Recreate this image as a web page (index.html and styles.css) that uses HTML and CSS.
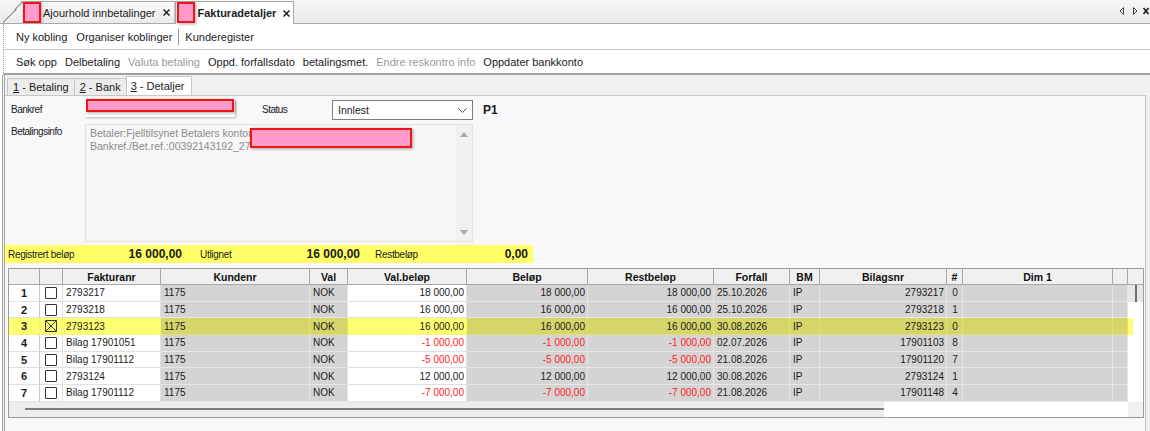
FILE: index.html
```html
<!DOCTYPE html>
<html lang="no">
<head>
    <meta charset="UTF-8">
    <title>Fakturadetaljer</title>
    <link rel="stylesheet" href="styles.css">
</head>
<body>
    <div class="doc-tabs">
        <div class="doc-tab first">
            <span class="redact tab-redact"></span>
            <span class="doc-title">Ajourhold innbetalinger</span>
            <svg class="close" width="7" height="7" viewBox="0 0 7 7"><path d="M0.5 0.5L6.5 6.5M6.5 0.5L0.5 6.5"/></svg>
        </div>
        <div class="doc-tab active">
            <span class="redact tab-redact"></span>
            <span class="doc-title">Fakturadetaljer</span>
            <svg class="close" width="7" height="7" viewBox="0 0 7 7"><path d="M0.5 0.5L6.5 6.5M6.5 0.5L0.5 6.5"/></svg>
        </div>
        <svg class="tab-nav" width="32" height="10" viewBox="0 0 32 10">
            <path class="nav-arrow" d="M5.5 1.5L2 5L5.5 8.5Z"/>
            <path class="nav-arrow" d="M15.5 1.5L19 5L15.5 8.5Z"/>
            <path class="nav-close" d="M25.5 2L30.5 8M30.5 2L25.5 8"/>
        </svg>
    </div>

    <div class="toolbar top">
        <span>Ny kobling</span>
        <span>Organiser koblinger</span>
        <span class="sep"></span>
        <span>Kunderegister</span>
    </div>
    <div class="toolbar bottom">
        <span>Søk opp</span>
        <span>Delbetaling</span>
        <span class="disabled">Valuta betaling</span>
        <span>Oppd. forfallsdato</span>
        <span>betalingsmet.</span>
        <span class="disabled">Endre reskontro info</span>
        <span>Oppdater bankkonto</span>
    </div>

    <div class="workspace">
        <div class="page-tabs">
            <span class="page-tab"><u>1</u>&nbsp;- Betaling</span>
            <span class="page-tab"><u>2</u>&nbsp;- Bank</span>
            <span class="page-tab active"><u>3</u>&nbsp;- Detaljer</span>
        </div>

        <div class="page">
            <div class="field-row first">
                <span class="label">Bankref</span>
                <span class="input bankref"><span class="redact bankref-redact"></span></span>
                <span class="label status-label">Status</span>
                <span class="select">
                    <span>Innlest</span>
                    <svg width="9" height="5" viewBox="0 0 9 5"><path d="M0.5 0.5L4.5 4.5L8.5 0.5"/></svg>
                </span>
                <span class="code">P1</span>
            </div>

            <div class="field-row">
                <span class="label">Betalingsinfo</span>
                <div class="memo">
                    <div class="memo-text">Betaler:Fjelltilsynet Betalers kontonr<br>Bankref./Bet.ref.:00392143192_27</div>
                    <span class="redact memo-redact"></span>
                    <div class="memo-scroll">
                        <svg width="8" height="5" viewBox="0 0 8 5"><path d="M4 0L8 5H0Z"/></svg>
                        <svg width="8" height="5" viewBox="0 0 8 5"><path d="M0 0H8L4 5Z"/></svg>
                    </div>
                </div>
            </div>

            <div class="summary">
                <span class="sum-label first">Registrert beløp</span>
                <span class="sum-value v1">16 000,00</span>
                <span class="sum-label second">Utlignet</span>
                <span class="sum-value v2">16 000,00</span>
                <span class="sum-label third">Restbeløp</span>
                <span class="sum-value v3">0,00</span>
            </div>

            <div class="grid">
                <table>
                    <colgroup>
                        <col style="width:31px"><col style="width:23px"><col style="width:98px"><col style="width:149px">
                        <col style="width:38px"><col style="width:119px"><col style="width:121px"><col style="width:126px">
                        <col style="width:76px"><col style="width:30px"><col style="width:127px"><col style="width:16px">
                        <col style="width:150px"><col style="width:15px">
                    </colgroup>
                    <thead>
                        <tr>
                            <th></th><th></th><th>Fakturanr</th><th>Kundenr</th><th>Val</th><th>Val.beløp</th><th>Beløp</th>
                            <th>Restbeløp</th><th>Forfall</th><th>BM</th><th>Bilagsnr</th><th>#</th><th>Dim 1</th><th></th>
                        </tr>
                    </thead>
                    <tbody>
                        <tr>
                            <td class="num">1</td><td class="chk"><span class="box"></span></td><td>2793217</td>
                            <td class="g">1175</td><td class="g">NOK</td><td class="r">18 000,00</td><td class="g r">18 000,00</td>
                            <td class="g r">18 000,00</td><td class="g">25.10.2026</td><td class="g">IP</td><td class="g r">2793217</td>
                            <td class="g c">0</td><td class="g"></td><td class="g"></td>
                        </tr>
                        <tr>
                            <td class="num">2</td><td class="chk"><span class="box"></span></td><td>2793218</td>
                            <td class="g">1175</td><td class="g">NOK</td><td class="r">16 000,00</td><td class="g r">16 000,00</td>
                            <td class="g r">16 000,00</td><td class="g">25.10.2026</td><td class="g">IP</td><td class="g r">2793218</td>
                            <td class="g c">1</td><td class="g"></td><td class="g"></td>
                        </tr>
                        <tr class="sel">
                            <td class="num">3</td>
                            <td class="chk"><svg class="box-checked" width="12" height="12" viewBox="0 0 12 12"><path d="M0.5 0.5H11.5V11.5H0.5ZM1 1L11 11M11 1L1 11"/></svg></td>
                            <td>2793123</td>
                            <td class="g">1175</td><td class="g">NOK</td><td class="r">16 000,00</td><td class="g r">16 000,00</td>
                            <td class="g r">16 000,00</td><td class="g">30.08.2026</td><td class="g">IP</td><td class="g r">2793123</td>
                            <td class="g c">0</td><td class="g"></td><td class="g"></td>
                        </tr>
                        <tr>
                            <td class="num">4</td><td class="chk"><span class="box"></span></td><td>Bilag 17901051</td>
                            <td class="g">1175</td><td class="g">NOK</td><td class="r neg">-1 000,00</td><td class="g r neg">-1 000,00</td>
                            <td class="g r neg">-1 000,00</td><td class="g">02.07.2026</td><td class="g">IP</td><td class="g r">17901103</td>
                            <td class="g c">8</td><td class="g"></td><td class="g"></td>
                        </tr>
                        <tr>
                            <td class="num">5</td><td class="chk"><span class="box"></span></td><td>Bilag 17901112</td>
                            <td class="g">1175</td><td class="g">NOK</td><td class="r neg">-5 000,00</td><td class="g r neg">-5 000,00</td>
                            <td class="g r neg">-5 000,00</td><td class="g">21.08.2026</td><td class="g">IP</td><td class="g r">17901120</td>
                            <td class="g c">7</td><td class="g"></td><td class="g"></td>
                        </tr>
                        <tr>
                            <td class="num">6</td><td class="chk"><span class="box"></span></td><td>2793124</td>
                            <td class="g">1175</td><td class="g">NOK</td><td class="r">12 000,00</td><td class="g r">12 000,00</td>
                            <td class="g r">12 000,00</td><td class="g">30.08.2026</td><td class="g">IP</td><td class="g r">2793124</td>
                            <td class="g c">1</td><td class="g"></td><td class="g"></td>
                        </tr>
                        <tr>
                            <td class="num">7</td><td class="chk"><span class="box"></span></td><td>Bilag 17901112</td>
                            <td class="g">1175</td><td class="g">NOK</td><td class="r neg">-7 000,00</td><td class="g r neg">-7 000,00</td>
                            <td class="g r neg">-7 000,00</td><td class="g">21.08.2026</td><td class="g">IP</td><td class="g r">17901148</td>
                            <td class="g c">4</td><td class="g"></td><td class="g"></td>
                        </tr>
                    </tbody>
                </table>
                <div class="vscroll">
                    <div class="vhead"></div>
                    <div class="vthumb"></div>
                    <div class="vsel"></div>
                </div>
                <div class="hscroll"><div class="hthumb"></div></div>
                <div class="corner"></div>
            </div>
        </div>
    </div>
</body>
</html>
```

FILE: styles.css
```css
* {
    box-sizing: border-box;
}
body {
    margin: 0;
    width: 1150px;
    height: 431px;
    overflow: hidden;
    font-family: "Liberation Sans", Arial, sans-serif;
    font-size: 11px;
    color: #1b1b1b;
    background: #fff;
}

/* document tabs */
.doc-tabs {
    display: flex;
    align-items: flex-end;
    height: 24px;
    padding-left: 3px;
    border-bottom: 1px solid #a9a9a9;
    background: linear-gradient(#f7f7f7, #eaeaea);
}
.doc-tab {
    position: relative;
    display: flex;
    align-items: center;
    height: 22px;
    padding-right: 4px;
    border: 1px solid #a9a9a9;
    border-bottom: 0;
    background: linear-gradient(#fafafa, #ebebeb);
}
.doc-tab.first {
    border-left: 0;
    padding-left: 20px;
    clip-path: polygon(-2px 100%, 18px 0, 100% 0, 100% 100%);
}
.doc-tab.first::before {
    content: "";
    position: absolute;
    left: 0;
    top: 0;
    width: 20px;
    height: 100%;
    background: linear-gradient(to bottom right, transparent calc(50% - 1px), #a2a2a2 calc(50% - 1px), #a2a2a2 calc(50% + 0.5px), transparent calc(50% + 0.5px));
}
.doc-tab.active {
    height: 23px;
    margin-bottom: -1px;
    padding-left: 1px;
    padding-right: 3px;
    background: #fff;
    font-weight: bold;
}
.doc-title {
    margin-left: 2px;
}
.doc-tab.active .doc-title {
    margin-left: 3px;
}
.close {
    margin-left: 7px;
    stroke: #222;
    stroke-width: 1.5;
}
.redact {
    display: inline-block;
    background: #ff9acb;
    border: 2px solid #f01414;
    box-shadow: 1px 1px 3px rgba(0, 0, 0, 0.35);
}
.tab-redact {
    width: 18px;
    height: 21px;
    align-self: flex-start;
}
.tab-nav {
    margin-left: auto;
    align-self: center;
    margin-bottom: 1px;
}
.nav-arrow {
    fill: none;
    stroke: #444;
    stroke-width: 1;
}
.nav-close {
    stroke: #222;
    stroke-width: 1.7;
}

/* toolbars */
.toolbar {
    display: flex;
    align-items: center;
    margin-left: 3px;
    padding-left: 12px;
    border-left: 1px dotted #9a9a9a;
    background: #fff;
    white-space: nowrap;
}
.toolbar.top {
    height: 26px;
    gap: 9px;
    border-bottom: 1px solid #c9c9c9;
}
.toolbar.bottom {
    height: 25px;
    gap: 8px;
    border-bottom: 2px solid #a0a0a0;
}
.sep {
    width: 1px;
    height: 16px;
    margin: 0 -3px;
    background: #9a9a9a;
}
.disabled {
    color: #9a9a9a;
}

/* workspace */
.workspace {
    display: flex;
    flex-direction: column;
    height: 356px;
    margin-left: 2px;
    border-left: 3px double #a6a6a6;
    background: #f0f0f0;
}
.page-tabs {
    display: flex;
    align-items: flex-end;
    height: 20px;
    padding-left: 2px;
}
.page-tab {
    display: flex;
    align-items: center;
    height: 17px;
    padding: 0 5px;
    margin-right: -1px;
    border: 1px solid #c6c6c6;
    border-bottom: 0;
    background: #ececec;
}
.page-tab.active {
    height: 19px;
    padding: 0 7px 0 4px;
    background: #fff;
}
.page {
    flex: 1;
    margin-right: 4px;
    border-top: 1px solid #c6c6c6;
    border-right: 1px solid #c6c6c6;
    background: #f8f8fa;
}

/* form */
.field-row {
    display: flex;
    align-items: flex-start;
}
.field-row.first {
    height: 28px;
    padding-top: 3px;
}
.label {
    width: 80px;
    padding-left: 6px;
    margin-top: 1px;
    font-size: 10px;
    letter-spacing: -0.5px;
    line-height: 14px;
}
.field-row.first .label {
    line-height: 20px;
}
.status-label {
    width: 70px;
    margin-left: 27px;
    padding-left: 0;
}
.input {
    position: relative;
    width: 150px;
    height: 18px;
    background: #fff;
    box-shadow: 1px 1px 2px rgba(0, 0, 0, 0.25);
}
.bankref-redact {
    position: absolute;
    left: 1px;
    top: 0;
    width: 148px;
    height: 13px;
}
.select {
    display: flex;
    align-items: center;
    justify-content: space-between;
    width: 141px;
    height: 20px;
    margin-top: 1px;
    padding: 0 5px 0 5px;
    border: 1px solid #7d7d7d;
    background: #fff;
    font-size: 10.5px;
}
.select svg {
    fill: none;
    stroke: #555;
    stroke-width: 1;
}
.code {
    margin-left: 10px;
    margin-top: 1px;
    line-height: 20px;
    font-size: 12px;
    font-weight: bold;
}
.memo {
    position: relative;
    display: flex;
    width: 388px;
    height: 118px;
    border: 1px solid #e2e2e2;
    background: #f7f7f7;
}
.memo-text {
    flex: 1;
    padding: 2px 0 0 4px;
    font-size: 10.5px;
    line-height: 13px;
    color: #8b8b8b;
}
.memo-redact {
    position: absolute;
    left: 164px;
    top: 3px;
    width: 162px;
    height: 20px;
}
.memo-scroll {
    display: flex;
    flex-direction: column;
    justify-content: space-between;
    align-items: center;
    width: 16px;
    padding: 7px 0 6px;
    background: #f0f0f0;
}
.memo-scroll svg {
    fill: #a8a8a8;
}

/* summary bar */
.summary {
    display: flex;
    align-items: center;
    width: 528px;
    height: 18px;
    margin-top: 3px;
    padding-left: 3px;
    background: #ffff66;
}
.sum-label {
    font-size: 10px;
    letter-spacing: -0.3px;
}
.sum-label.first { width: 100px; }
.sum-label.second { width: 90px; margin-left: 18px; }
.sum-label.third { width: 80px; margin-left: 15px; }
.sum-value {
    text-align: right;
    font-size: 12px;
    font-weight: bold;
}
.sum-value.v1 { width: 74px; }
.sum-value.v2 { width: 70px; }
.sum-value.v3 { width: 73px; }

/* grid */
.grid {
    display: grid;
    grid-template-columns: 1fr 15px;
    grid-template-rows: auto 15px;
    margin: 5px 1px 0 3px;
    border: 1px solid #9c9c9c;
    background: #fff;
}
table {
    width: 1119px;
    table-layout: fixed;
    border-collapse: separate;
    border-spacing: 0;
    font-size: 10px;
}
thead tr {
    height: 16px;
}
tbody tr {
    height: 16.7px;
}
th {
    padding: 0;
    border-right: 1px solid #a8a8a8;
    border-bottom: 1px solid #a8a8a8;
    background: #f0f0f0;
    font-size: 10.5px;
    font-weight: bold;
    text-align: center;
    color: #111;
}
td {
    padding: 0 2px 0 3px;
    border-right: 1px solid #e0e0e0;
    border-bottom: 1px solid #e0e0e0;
    white-space: nowrap;
    overflow: hidden;
    background: #fff;
}
td.g {
    background: #d4d4d4;
    border-color: #e6e6e6;
}
td.r {
    text-align: right;
}
td.c {
    text-align: center;
}
td.neg {
    color: #f22;
}
td.num {
    padding: 0;
    text-align: center;
    font-size: 11px;
    font-weight: bold;
    border-right-color: #c8c8c8;
}
td.chk {
    padding: 0 0 0 5px;
    line-height: 0;
}
.box {
    display: inline-block;
    width: 12px;
    height: 12px;
    border: 1px solid #333;
    border-radius: 1px;
    background: #fff;
}
.box-checked {
    fill: none;
    stroke: #333;
    stroke-width: 1;
}
tr.sel td {
    background: #ffff72;
    border-color: #f4f47a;
}
tr.sel td.g {
    background: #d6d56a;
    border-color: #e2e170;
}
.vscroll {
    display: flex;
    flex-direction: column;
    background: #fff;
}
.vhead {
    height: 16px;
    border-bottom: 1px solid #a8a8a8;
    background: #f0f0f0;
}
.vthumb {
    display: flex;
    justify-content: center;
    height: 16.7px;
    background: #e6e6e6;
}
.vthumb::after {
    content: "";
    width: 2px;
    background: #6e6e6e;
}
.vsel {
    width: 5px;
    height: 16.7px;
    margin-top: 16.7px;
    background: #ffff72;
}
.hscroll {
    display: flex;
    background: #fff;
}
.hthumb {
    display: flex;
    align-items: center;
    width: 875px;
    padding-left: 16px;
    background: #ededed;
}
.hthumb::after {
    content: "";
    flex: 1;
    height: 2px;
    background: #7c7c7c;
}
.corner {
    background: #f0f0f0;
}
```
